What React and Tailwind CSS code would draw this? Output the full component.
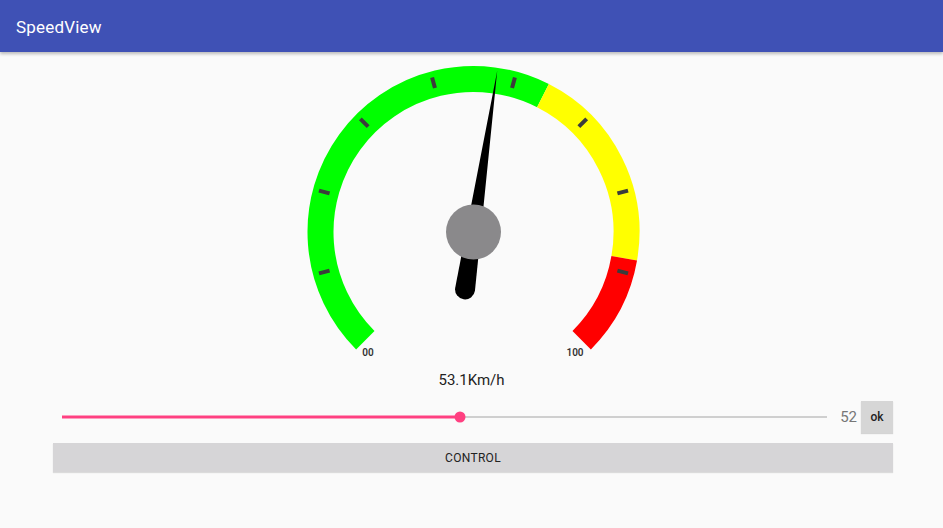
import React from "react";

const CX = 171.5;
const CY = 172;
const R = 153;

const pt = (deg, r) => {
  const a = (deg * Math.PI) / 180;
  return [CX + r * Math.cos(a), CY + r * Math.sin(a)];
};

const arcPath = (from, to, r) => {
  const [x1, y1] = pt(from, r);
  const [x2, y2] = pt(to, r);
  const large = to - from > 180 ? 1 : 0;
  return `M ${x1} ${y1} A ${r} ${r} 0 ${large} 1 ${x2} ${y2}`;
};

const Gauge = ({ speed }) => {
  const start = 135;
  const sweep = 270;
  const lowEnd = start + sweep * 0.6;
  const midEnd = start + sweep * 0.87;
  const end = start + sweep;
  const needleDeg = start + (speed / 100) * sweep;
  const ticks = [];
  for (let i = 1; i <= 8; i++) ticks.push(start + i * 30);

  return (
    <svg width="340" height="302" viewBox="0 0 340 302" className="mx-auto mt-2 block">
      <path d={arcPath(start, lowEnd, R)} stroke="#00ff00" strokeWidth="26" fill="none" />
      <path d={arcPath(lowEnd, midEnd, R)} stroke="#ffff00" strokeWidth="26" fill="none" />
      <path d={arcPath(midEnd, end, R)} stroke="#ff0000" strokeWidth="26" fill="none" />
      {ticks.map((d) => {
        const [x1, y1] = pt(d, 149);
        const [x2, y2] = pt(d, 160);
        return <line key={d} x1={x1} y1={y1} x2={x2} y2={y2} stroke="#3c3c3c" strokeWidth="4" />;
      })}
      <g transform={`translate(${CX} ${CY}) rotate(${needleDeg + 90})`}>
        <path d="M 0 -163 L 10 58 A 10 10 0 0 1 -10 58 Z" fill="#000" />
      </g>
      <circle cx={CX} cy={CY} r="27.5" fill="#8a898b" />
      <text x="66" y="296" fontSize="10" fontWeight="600" fill="#333" textAnchor="middle" fontFamily="Roboto, sans-serif">00</text>
      <text x="273" y="296" fontSize="10" fontWeight="600" fill="#333" textAnchor="middle" fontFamily="Roboto, sans-serif">100</text>
    </svg>
  );
};

export default function App() {
  const value = 52;
  return (
    <div className="w-[943px] h-[528px] bg-[#fafafa] overflow-hidden font-['Roboto',sans-serif]">
      {/* Toolbar */}
      <div className="h-[52px] bg-[#3f51b5] flex items-center pt-[3px] px-4 shadow-[0_2px_3px_rgba(0,0,0,0.25)] relative z-10">
        <span className="text-white text-[17px] tracking-[0.2px]">SpeedView</span>
      </div>

      <Gauge speed={53.1} />

      <div className="mt-[8px] h-[20px] leading-[20px] text-center text-[15px] text-[#222]">
        53.1Km/h
      </div>

      {/* Slider row */}
      <div className="mt-[11px] ml-[53px] mr-[50px] h-8 flex items-center">
        <div className="flex-1 ml-[9px] relative h-8">
          <div className="absolute left-0 right-0 top-1/2 -translate-y-1/2 h-[2px] bg-[#cfcfcf]" />
          <div
            className="absolute left-0 top-1/2 -translate-y-1/2 h-[3px] bg-[#ff4081]"
            style={{ width: `${value}%` }}
          />
          <div
            className="absolute top-1/2 -translate-y-1/2 -translate-x-1/2 w-[11px] h-[11px] rounded-full bg-[#ff4081]"
            style={{ left: `${value}%` }}
          />
        </div>
        <span className="ml-[13px] text-[15px] text-[#777]">{value}</span>
        <button className="ml-[4px] w-8 h-8 bg-[#d6d6d6] text-[12px] font-medium text-[#222] shadow-[0_1px_1px_rgba(0,0,0,0.15)]">
          ok
        </button>
      </div>

      {/* Control button */}
      <button className="mt-[10px] ml-[53px] w-[840px] h-[29px] bg-[#d6d5d7] text-[12px] text-[#222] tracking-[0.3px] shadow-[0_1px_1px_rgba(0,0,0,0.12)]">
        CONTROL
      </button>
    </div>
  );
}
